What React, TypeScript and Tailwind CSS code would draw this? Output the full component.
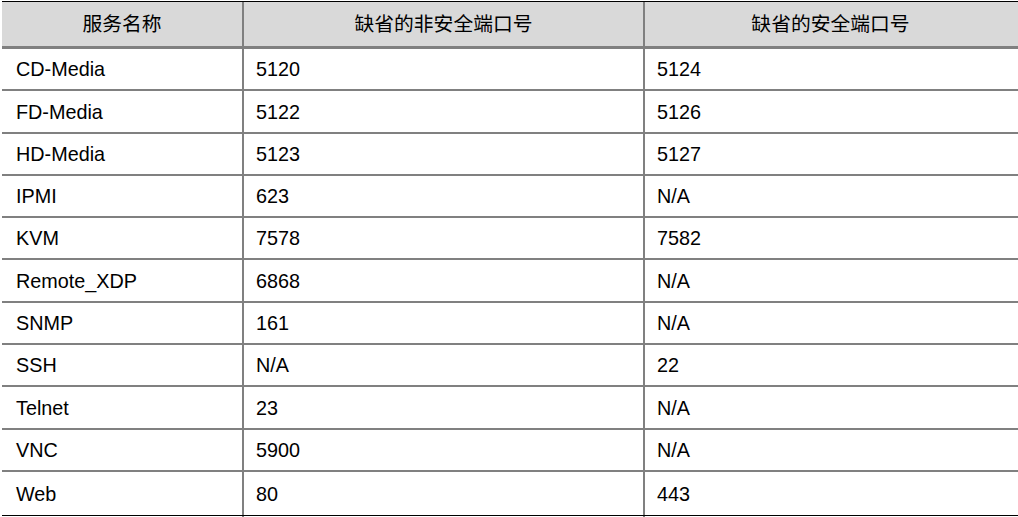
const rows: [string, string, string][] = [
  ['CD-Media', '5120', '5124'],
  ['FD-Media', '5122', '5126'],
  ['HD-Media', '5123', '5127'],
  ['IPMI', '623', 'N/A'],
  ['KVM', '7578', '7582'],
  ['Remote_XDP', '6868', 'N/A'],
  ['SNMP', '161', 'N/A'],
  ['SSH', 'N/A', '22'],
  ['Telnet', '23', 'N/A'],
  ['VNC', '5900', 'N/A'],
  ['Web', '80', '443'],
];

export default function App() {
  return (
    <div
      className="w-[1018px] h-[517px] bg-white overflow-hidden pt-px pl-[2px] text-[19.8px] text-black"
      style={{ fontFamily: '"Liberation Sans", Arial, "Noto Sans CJK SC", sans-serif' }}
    >
      <div className="border-t border-black">
        {/* Header */}
        <div className="flex h-[47px] bg-[#d9d9d9] border-b-[3px] border-[#808080]">
          <div className="w-[242px] shrink-0 border-r-2 border-[#808080] flex items-center justify-center pt-[2px]">
            服务名称
          </div>
          <div className="w-[401px] shrink-0 border-r-2 border-[#808080] flex items-center justify-center pt-[2px]">
            缺省的非安全端口号
          </div>
          <div className="flex-1 flex items-center justify-center pr-[2px] pt-[2px]">缺省的安全端口号</div>
        </div>

        {/* Body */}
        {rows.map(([name, plain, secure], i) => (
          <div
            key={name}
            className={
              i === rows.length - 1
                ? 'flex h-[44.3px] border-b border-black'
                : 'flex h-[42.3px] border-b-2 border-[#808080]'
            }
          >
            <div className="w-[242px] shrink-0 border-r-2 border-[#808080] flex items-center pl-[14px] pt-[2px]">
              {name}
            </div>
            <div className="w-[401px] shrink-0 border-r-2 border-[#808080] flex items-center pl-[12px] pt-[2px]">
              {plain}
            </div>
            <div className="flex-1 flex items-center pl-[12px] pt-[2px]">{secure}</div>
          </div>
        ))}
        <div className="flex h-[4px]">
          <div className="w-[242px] shrink-0 border-r-2 border-[#808080]" />
          <div className="w-[401px] shrink-0 border-r-2 border-[#808080]" />
        </div>
      </div>
    </div>
  );
}
